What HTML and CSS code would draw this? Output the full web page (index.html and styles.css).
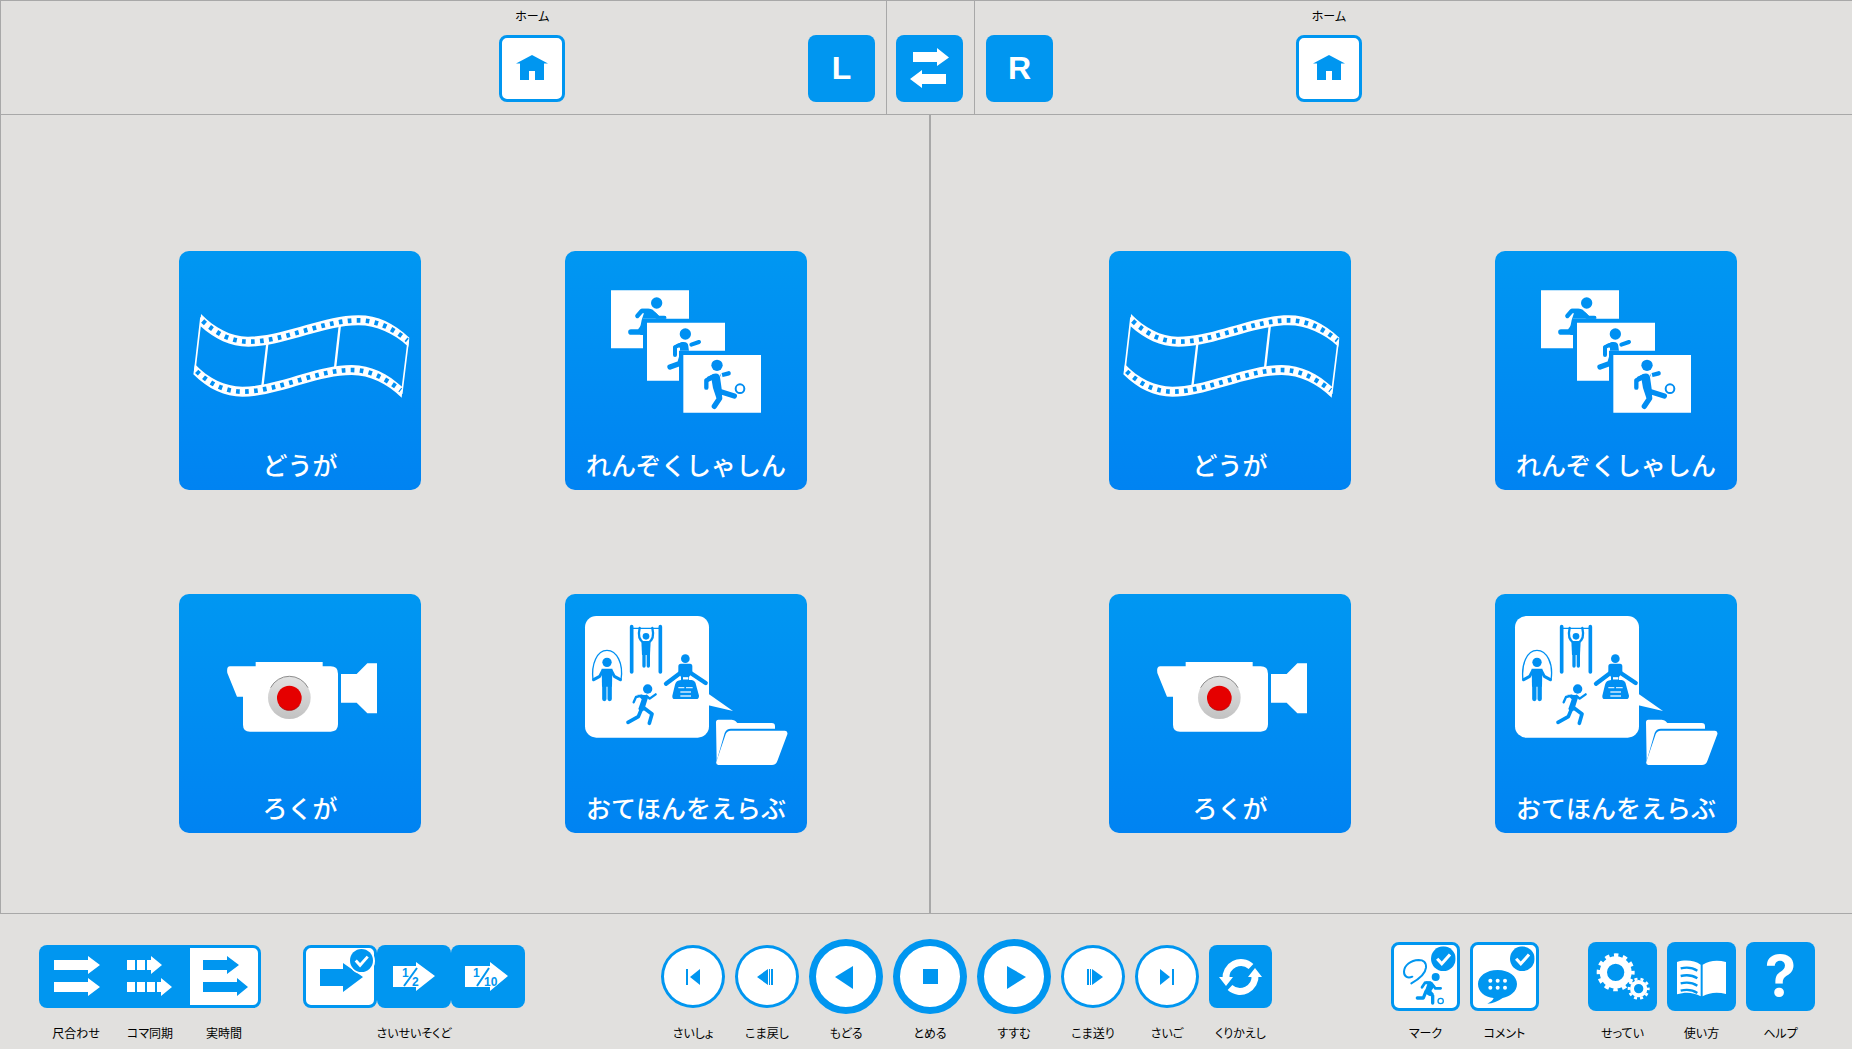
FILE: index.html
```html
<!DOCTYPE html>
<html lang="ja">
<head>
<meta charset="utf-8">
<meta name="viewport" content="width=device-width, initial-scale=1">
<title>ホーム</title>
<link rel="stylesheet" href="styles.css">
</head>
<body>
<svg class="sprite" width="0" height="0" aria-hidden="true">
  <defs>
    <linearGradient id="knob" x1="0" y1="0" x2="0" y2="1">
      <stop offset="0" stop-color="#e2e2e2"/><stop offset="1" stop-color="#c2c2c2"/>
    </linearGradient>
    <clipPath id="photo-back"><path d="M168 151H402V236H264V325H168Z"/></clipPath>
    <clipPath id="photo-mid"><path d="M276 248H510V332H372V422H276Z"/></clipPath>
  </defs>

  <symbol id="home" viewBox="0 0 66 67">
    <path fill="#0096f0" d="M33 20L49 28.500H45V45H36V36H30V45H21V28.500H17Z"/>
  </symbol>

  <symbol id="film" viewBox="27 33 726 717">
    <g fill="#fff">
      <path d="M93 222C135 265 185 291 235 290C340 290 460 226 565 226C625 226 670 250 718 293L715 320C670 280 620 256 565 256C460 256 340 320 235 320C180 319 135 298 91 258Z"/>
      <path d="M75 373C115 415 165 440 217 440C320 440 440 375 545 375C605 375 655 403 698 442L695 473C650 430 600 405 545 405C440 405 320 470 217 470C165 470 115 448 70 403Z"/>
    </g>
    <g fill="none" stroke="#fff">
      <path stroke-width="5" d="M93 232L74 395M715 300L695 462"/>
      <path stroke-width="7" d="M292 310L277 440M510 252L495 385"/>
    </g>
    <g fill="none" stroke="#008ff2" stroke-width="14" stroke-dasharray="11 16">
      <path d="M98 243C140 282 185 305 238 305C340 305 460 241 565 241C620 241 665 263 712 301"/>
      <path d="M80 394C120 432 165 455 218 455C320 455 440 390 545 390C600 390 645 414 692 451"/>
    </g>
  </symbol>

  <symbol id="photos" viewBox="30 33 726 717">
    <path fill="#fff" d="M168 151H402V236H264V325H168ZM276 248H510V332H372V422H276ZM385 345H618V518H385Z"/>
    <g clip-path="url(#photo-back)" fill="none" stroke="#0092f2" stroke-linecap="round" stroke-linejoin="round">
      <circle cx="305" cy="189" r="17" fill="#0092f2" stroke="none"/>
      <path fill="#0092f2" stroke="none" d="M259 206H284Q293 206 298 214L312 228H332V240H300L264 272V285H256L254 270L260 240L268 216Z"/>
      <path stroke-width="13" d="M247 228L260 213H280M299 224L310 234H328"/>
      <path stroke-width="17" d="M228 276H254L264 262"/>
    </g>
    <g clip-path="url(#photo-mid)" fill="none" stroke="#0090f2" stroke-linecap="round" stroke-linejoin="round">
      <circle cx="391" cy="282" r="17" fill="#0090f2" stroke="none"/>
      <path fill="#0090f2" stroke="none" d="M363 313L382 306Q399 304 400 318L402 334H372V372L368 364L375 340V324Z"/>
      <path stroke-width="12" d="M360 345V321L382 312"/>
      <path stroke-width="12" d="M409 314L432 306"/>
      <path stroke-width="16" d="M345 381L372 371"/>
    </g>
    <g fill="none" stroke="#008df2" stroke-linecap="round" stroke-linejoin="round">
      <circle cx="486" cy="376" r="17" fill="#008df2" stroke="none"/>
      <path fill="#008df2" stroke="none" d="M456 411L478 401Q492 398 495 411L500 446L496 480L484 474L474 444L470 421L459 426Z"/>
      <path stroke-width="13" d="M454 443V421L476 408M502 405L521 400"/>
      <path stroke-width="16" d="M488 452L538 468M492 456L494 475L478 499"/>
      <path stroke="#fff" stroke-width="4" d="M497 398L501 412"/>
      <circle cx="555" cy="446" r="13" stroke-width="6"/>
    </g>
  </symbol>

  <symbol id="camera" viewBox="27 27 726 717">
    <g fill="#fff">
      <path d="M180 244H257V231H458V244H482Q504 244 504 266V418Q504 440 482 440H240Q219 440 219 419V335H201L172 264Q169 244 180 244Z"/>
      <path d="M513 267H560L592 235H621V385H592L560 353H513Z"/>
    </g>
    <circle cx="358" cy="338" r="64" fill="url(#knob)"/>
    <path fill="none" stroke="#8d8d8d" stroke-width="3" d="M302 308A63 63 0 0 1 414 308"/>
    <circle cx="358" cy="339" r="37" fill="#e50000"/>
    <path fill="none" stroke="#900" stroke-width="2" d="M328 361A37 37 0 0 0 388 361"/>
  </symbol>

  <symbol id="models" viewBox="30 27 726 717">
    <rect x="90" y="93" width="372" height="365" rx="34" fill="#fff"/>
    <path fill="#fff" d="M460 326L534 378L460 361Z"/>
    <g fill="none" stroke="#0090f2" stroke-linecap="round" stroke-linejoin="round">
      <path stroke-width="11" d="M230 125V261M316 125V261"/>
      <path stroke-width="4" d="M230 130H316"/>
      <path stroke-width="7" d="M254 129Q246 162 266 173M292 129Q300 162 280 173"/>
      <circle cx="273" cy="154" r="10" fill="#0090f2" stroke="none"/>
      <path fill="#0090f2" stroke="none" d="M259 168H287L285 210H261Z"/>
      <path stroke-width="10" d="M267 205V243M280 205V243"/>

      <path stroke-width="4" d="M114 285C108 235 127 196 156 196S206 235 198 285"/>
      <circle cx="156" cy="232" r="14" fill="#008ff2" stroke="none"/>
      <path fill="#008ff2" stroke="none" d="M140 251H172L171 305H141Z"/>
      <path stroke-width="9" d="M143 257L134 274L116 284M169 257L178 274L196 284"/>
      <path stroke-width="13" d="M148 300V342M164 300V342"/>

      <circle cx="278" cy="312" r="14" fill="#008df2" stroke="none"/>
      <path fill="#008df2" stroke="none" d="M247 329L272 330L279 338L270 367L274 373L257 381L250 372L260 343Z"/>
      <path stroke-width="7" d="M236 352L243 336L260 332M274 332L284 341L302 328"/>
      <path stroke-width="11" d="M260 371L250 395L219 412M264 367L291 387L283 415"/>

      <circle cx="391" cy="221" r="13" fill="#008ff2" stroke="none"/>
      <path fill="#008ff2" stroke="none" d="M378 236H405Q412 236 412 244V262L402 276V285H410Q421 287 423 299L432 332Q432 342 424 342H359Q351 342 352 332L360 299Q363 286 378 285V276L370 262V244Q370 236 378 236Z"/>
      <path stroke-width="13" d="M376 264L333 296M407 264L452 294"/>
      <path stroke="#fff" stroke-width="7" stroke-linecap="butt" d="M384 280H400"/>
      <path stroke="#cfeaff" stroke-width="4" stroke-linecap="butt" d="M370 308H388M393 308H413M376 321H408M376 333H408"/>
    </g>
    <g fill="#fff">
      <path d="M490 404H530Q538 404 542 409L547 414H650Q660 414 660 424V431H528Q514 431 509 444L485 528L483 412Q483 404 490 404Z"/>
      <path d="M527 437H690Q699 438 697 448L667 528Q663 540 651 540H490Q482 539 484 530L512 448Q516 437 527 437Z"/>
    </g>
  </symbol>

  <symbol id="check" viewBox="0 0 24 24">
    <circle cx="12" cy="12" r="12" fill="#0096f0"/>
    <path fill="none" stroke="#fff" stroke-width="3" d="M6 12L10.500 17L18.500 8"/>
  </symbol>
</svg>

<div class="page">
  <header class="topbar">
    <div class="side side--left">
      <div class="item home">
        <label for="home-left">ホーム</label>
        <button id="home-left" class="key key--home" type="button"><svg aria-hidden="true"><use href="#home"/></svg></button>
      </div>
      <button class="key letter" type="button">L</button>
    </div>
    <div class="middle">
      <button class="key" type="button" aria-label="入れ替え">
        <svg viewBox="0 0 67 67" aria-hidden="true"><path fill="#fff" d="M17 17H41V13L53 22.500L41 31V27H17ZM50 39H26V35L14 44L26 53V49H50Z"/></svg>
      </button>
    </div>
    <div class="side side--right">
      <button class="key letter" type="button">R</button>
      <div class="item home">
        <label for="home-right">ホーム</label>
        <button id="home-right" class="key key--home" type="button"><svg aria-hidden="true"><use href="#home"/></svg></button>
      </div>
    </div>
  </header>

  <main class="panes">
    <section class="pane pane--left">
      <button class="tile" type="button"><svg aria-hidden="true"><use href="#film"/></svg><span>どうが</span></button>
      <button class="tile" type="button"><svg aria-hidden="true"><use href="#photos"/></svg><span>れんぞくしゃしん</span></button>
      <button class="tile" type="button"><svg aria-hidden="true"><use href="#camera"/></svg><span>ろくが</span></button>
      <button class="tile" type="button"><svg aria-hidden="true"><use href="#models"/></svg><span>おてほんをえらぶ</span></button>
    </section>
    <section class="pane pane--right">
      <button class="tile" type="button"><svg aria-hidden="true"><use href="#film"/></svg><span>どうが</span></button>
      <button class="tile" type="button"><svg aria-hidden="true"><use href="#photos"/></svg><span>れんぞくしゃしん</span></button>
      <button class="tile" type="button"><svg aria-hidden="true"><use href="#camera"/></svg><span>ろくが</span></button>
      <button class="tile" type="button"><svg aria-hidden="true"><use href="#models"/></svg><span>おてほんをえらぶ</span></button>
    </section>
  </main>

  <footer class="controls">
    <div class="cluster cluster--start">
      <div class="sync">
        <div class="item">
          <div class="slot"><button id="fit" class="seg seg--first" type="button"><svg viewBox="0 0 74 63" aria-hidden="true"><path fill="#fff" d="M15 15H49V11L61 20L49 29V25H15ZM15 37H49V33L61 42L49 51V47H15Z"/></svg></button></div>
          <label for="fit">尺合わせ</label>
        </div>
        <div class="item">
          <div class="slot"><button id="frames" class="seg" type="button"><svg viewBox="0 0 74 63" aria-hidden="true"><path fill="#fff" d="M14 15H22V25H14ZM24 15H32V25H24ZM34 15H38V11L49 20L38 29V25H34ZM14 37H22V47H14ZM24 37H32V47H24ZM34 37H42V47H34ZM44 37H48V33L59 42L48 51V47H44Z"/></svg></button></div>
          <label for="frames">コマ同期</label>
        </div>
        <div class="item">
          <div class="slot"><button id="realtime" class="seg seg--last" type="button" aria-pressed="true"><svg viewBox="0 0 74 63" aria-hidden="true"><path fill="#0096f0" d="M16 15H40V11L52 20L40 29V25H16ZM16 37H50V33L61 42L50 51V47H16Z"/></svg></button></div>
          <label for="realtime">実時間</label>
        </div>
      </div>
      <div class="item" role="group" aria-labelledby="speed-label">
        <div class="slot">
          <button class="speed speed--on" type="button" aria-pressed="true" aria-label="1"><svg viewBox="0 0 74 63" aria-hidden="true"><path fill="#0096f0" d="M17 24H40V18L60 32L40 47V41H17Z"/><circle cx="59" cy="16" r="13" fill="#fff"/><use href="#check" x="47" y="4" width="23" height="23"/></svg></button>
          <button class="speed" type="button"><svg viewBox="0 0 74 63"><path fill="#fff" d="M16 21H39V17L58 31L39 46V42H16Z"/><path stroke="#0096f0" stroke-width="2" d="M40 23L27 41"/><text x="25" y="32">1</text><text x="35" y="41">2</text></svg></button>
          <button class="speed" type="button"><svg viewBox="0 0 74 63"><path fill="#fff" d="M14 21H39V17L57 31L39 46V42H14Z"/><path stroke="#0096f0" stroke-width="2" d="M38 23L26 41"/><text x="22" y="32">1</text><text x="33" y="41">10</text></svg></button>
        </div>
        <span id="speed-label" class="caption">さいせいそくど</span>
      </div>
    </div>

    <div class="cluster cluster--transport">
      <div class="item"><div class="slot"><button id="first" class="round" type="button"><svg viewBox="0 0 64 63" aria-hidden="true"><path d="M25 24H27V40H25ZM39 24V40L29 32Z"/></svg></button></div><label for="first">さいしょ</label></div>
      <div class="item"><div class="slot"><button id="step-back" class="round" type="button"><svg viewBox="0 0 64 63" aria-hidden="true"><path d="M33 24V40L22 32ZM34 24H35V40H34ZM36 24H38V40H36Z"/></svg></button></div><label for="step-back">こま戻し</label></div>
      <div class="item"><div class="slot"><button id="back" class="round round--big" type="button"><svg viewBox="0 0 74 75" aria-hidden="true"><path d="M44 27V50L26 38Z"/></svg></button></div><label for="back">もどる</label></div>
      <div class="item"><div class="slot"><button id="stop" class="round round--big" type="button"><svg viewBox="0 0 74 75" aria-hidden="true"><path d="M30 30H45V45H30Z"/></svg></button></div><label for="stop">とめる</label></div>
      <div class="item"><div class="slot"><button id="play" class="round round--big" type="button"><svg viewBox="0 0 74 75" aria-hidden="true"><path d="M30 27L49 38L30 50Z"/></svg></button></div><label for="play">すすむ</label></div>
      <div class="item"><div class="slot"><button id="step-next" class="round" type="button"><svg viewBox="0 0 64 63" aria-hidden="true"><path d="M26 24H28V40H26ZM29 24H30V40H29ZM31 24L42 32L31 40Z"/></svg></button></div><label for="step-next">こま送り</label></div>
      <div class="item"><div class="slot"><button id="last" class="round" type="button"><svg viewBox="0 0 64 63" aria-hidden="true"><path d="M25 24L35 32L25 40ZM37 24H39V40H37Z"/></svg></button></div><label for="last">さいご</label></div>
      <div class="item"><div class="slot"><button id="loop" class="key key--loop" type="button"><svg viewBox="0 0 63 63" aria-hidden="true"><g fill="none" stroke="#fff" stroke-width="7"><path d="M42 21.500A15 15 0 0 0 17 34"/><path d="M21 42.500A15 15 0 0 0 46 30"/></g><path fill="#fff" d="M10 32H24L17 41ZM39 32H53L46 23Z"/></svg></button></div><label for="loop">くりかえし</label></div>
    </div>

    <div class="cluster cluster--end">
      <div class="tools">
        <div class="item"><div class="slot"><button id="mark" class="tool tool--on" type="button" aria-pressed="true"><svg viewBox="63 126 207 207" aria-hidden="true">
          <g fill="none" stroke="#0096f0" stroke-linecap="round" stroke-linejoin="round">
            <path stroke-width="6" d="M124 250C146 238 166 222 168 203C169 186 160 180 146 180C122 181 103 196 102 215C102 231 114 236 127 230"/>
            <circle cx="197" cy="231" r="12" fill="#0096f0" stroke="none"/>
            <path fill="#0096f0" stroke="none" d="M167 244H182L194 257L184 273L192 282L178 288L163 278L172 252Z"/>
            <path stroke-width="8" d="M156 262L165 248L184 249L196 265H212"/>
            <path stroke-width="10" d="M168 274L160 294H142M177 277L188 287V309"/>
            <circle cx="212" cy="303" r="8" stroke-width="4"/>
          </g><use href="#check" x="183" y="139" width="74" height="74"/></svg></button></div><label for="mark">マーク</label></div>
        <div class="item"><div class="slot"><button id="comment" class="tool tool--on" type="button" aria-pressed="true"><svg viewBox="297 126 207 207" aria-hidden="true">
          <path fill="#0096f0" d="M380 210C415 210 438 230 438 252C438 275 417 290 395 294C381 304 365 311 349 311C360 306 366 300 368 294C340 291 321 275 321 252C321 229 346 210 380 210Z"/>
          <g fill="#fff"><circle cx="358" cy="242" r="6"/><circle cx="380" cy="242" r="6"/><circle cx="402" cy="242" r="6"/><circle cx="358" cy="263" r="6"/><circle cx="380" cy="263" r="6"/><circle cx="402" cy="263" r="6"/></g>
          <use href="#check" x="417" y="139" width="74" height="74"/></svg></button></div><label for="comment">コメント</label></div>
      </div>
      <div class="tools">
        <div class="item"><div class="slot"><button id="settings" class="tool" type="button"><svg viewBox="651 126 207 207" aria-hidden="true">
          <g fill="none" stroke="#fff">
            <circle cx="734" cy="217" r="37" stroke-width="22"/>
            <circle cx="734" cy="217" r="51" stroke-width="12" stroke-dasharray="13.350 13.350" stroke-dashoffset="6.700"/>
            <circle cx="803" cy="266" r="20" stroke-width="12"/>
            <circle cx="803" cy="266" r="29" stroke-width="8" stroke-dasharray="9.110 9.110" stroke-dashoffset="4.500"/>
          </g></svg></button></div><label for="settings">せってい</label></div>
        <div class="item"><div class="slot"><button id="guide" class="tool" type="button"><svg viewBox="891 126 207 207" aria-hidden="true">
          <path fill="#fff" d="M921 186C945 178 974 181 992 194V289C971 277 947 275 921 283ZM998 194C1018 181 1043 179 1068 186V282C1043 275 1018 277 998 289Z"/>
          <path fill="none" stroke="#0096f0" stroke-width="7" d="M932 205Q961 198 982 212M932 228Q961 221 982 235M932 250Q961 243 982 257M932 272Q961 265 982 279"/></svg></button></div><label for="guide">使い方</label></div>
        <div class="item"><div class="slot"><button id="help" class="tool tool--help" type="button">?</button></div><label for="help">ヘルプ</label></div>
      </div>
    </div>
  </footer>
</div>
</body>
</html>
```
FILE: styles.css
```css
:root {
  --blue: #0096f0;
  --ground: #e1e0de;
  --line: #a8a8a8;
}

* { box-sizing: border-box; }

body {
  margin: 0;
  background: var(--ground);
  color: #000;
  font: 12px/18px "Noto Sans CJK JP", sans-serif;
  font-feature-settings: "palt";
}

button {
  display: block;
  flex: none;
  margin: 0;
  padding: 0;
  border: 0;
  color: #fff;
  background: var(--blue);
  cursor: pointer;
}

button svg { display: block; width: 100%; height: 100%; }

.sprite { position: absolute; }

.page {
  display: grid;
  grid-template-rows: auto 1fr auto;
  min-height: 100vh;
}

/* top bar */
.topbar {
  display: grid;
  grid-template-columns: 887fr 88px 877fr;
  border: solid var(--line);
  border-width: 1px 0;
}

.side {
  display: grid;
  align-items: end;
  padding: 6px 0 12px;
}

.side--left {
  grid-template-columns: 499fr 66px 243fr 67px;
  padding-right: 11px;
  border: solid var(--line);
  border-width: 0 1px;
}
.side--left .home { grid-column: 2; }
.side--left .letter { grid-column: 4; }

.side--right {
  grid-template-columns: 67px 243fr 66px 490fr;
  padding-left: 11px;
}
.side--right .home { grid-column: 3; }

.middle {
  display: flex;
  align-items: flex-end;
  padding: 0 0 12px 9px;
  border-right: 1px solid var(--line);
}

.item {
  display: flex;
  flex-direction: column;
  align-items: center;
  gap: 10px;
  white-space: nowrap;
}

.key {
  width: 67px;
  height: 67px;
  border-radius: 8px;
}
.key--home {
  width: 66px;
  border: 3px solid var(--blue);
  background: #fff;
}
.key--home svg { width: 66px; height: 67px; margin: -3px; }
.key--loop { width: 63px; height: 63px; }

.letter { font: 700 32px/67px "Liberation Sans", sans-serif; }

/* panes */
.panes {
  display: grid;
  grid-template-columns: 930fr 922fr;
}

.pane {
  display: grid;
  align-content: start;
  row-gap: 104px;
  padding: 136px 0 80px;
}
.pane--left {
  grid-template-columns: 178fr 242px 144fr 242px 122fr;
  border: solid var(--line);
  border-width: 0 1px;
}
.pane--right {
  grid-template-columns: 178fr 242px 144fr 242px 115fr;
  border-left: 1px solid var(--line);
}

.tile {
  position: relative;
  width: 242px;
  height: 239px;
  border-radius: 10px;
  background: linear-gradient(#0097f2, #0083f2);
}
.tile:nth-child(odd) { grid-column: 2; }
.tile:nth-child(even) { grid-column: 4; }
.tile span {
  position: absolute;
  right: 0;
  bottom: 10px;
  left: 0;
  font: 500 25px/32px "Noto Sans CJK JP", sans-serif;
  font-feature-settings: normal;
}

/* control bar */
.controls {
  display: grid;
  grid-template-columns: auto 136fr auto 119fr auto;
  padding: 25px 37px 7px 39px;
  border-top: 1px solid var(--line);
}

.cluster, .sync, .tools, .slot { display: flex; }
.cluster--start { grid-column: 1; gap: 42px; }
.cluster--transport { grid-column: 3; gap: 10px; }
.cluster--end { grid-column: 5; gap: 49px; }
.tools { gap: 10px; }
.slot { align-items: center; height: 75px; }

.seg, .speed { width: 74px; height: 63px; }
.seg--first { border-radius: 8px 0 0 8px; }
.seg--last {
  border: 3px solid var(--blue);
  border-radius: 0 8px 8px 0;
  background: #fff;
}
.speed { border-radius: 8px; }
.speed--on {
  border: 3px solid var(--blue);
  background: #fff;
}
.seg--last svg, .speed--on svg { width: 74px; height: 63px; margin: -3px; }
.speed text {
  fill: var(--blue);
  font: 700 12px/1 "Liberation Sans", sans-serif;
}

.round {
  width: 64px;
  height: 63px;
  border: 3px solid var(--blue);
  border-radius: 50%;
  background: #fff;
}
.round svg { width: 64px; height: 63px; margin: -3px; fill: var(--blue); }
.round--big {
  width: 74px;
  height: 75px;
  border-width: 7px;
}
.round--big svg { width: 74px; height: 75px; margin: -7px; }

.tool {
  width: 69px;
  height: 69px;
  border-radius: 8px;
}
.tool--on {
  border: 3px solid var(--blue);
  background: #fff;
}
.tool--on svg { width: 69px; height: 69px; margin: -3px; }
.tool--help { font: 700 56px/69px Inter, sans-serif; }
```
